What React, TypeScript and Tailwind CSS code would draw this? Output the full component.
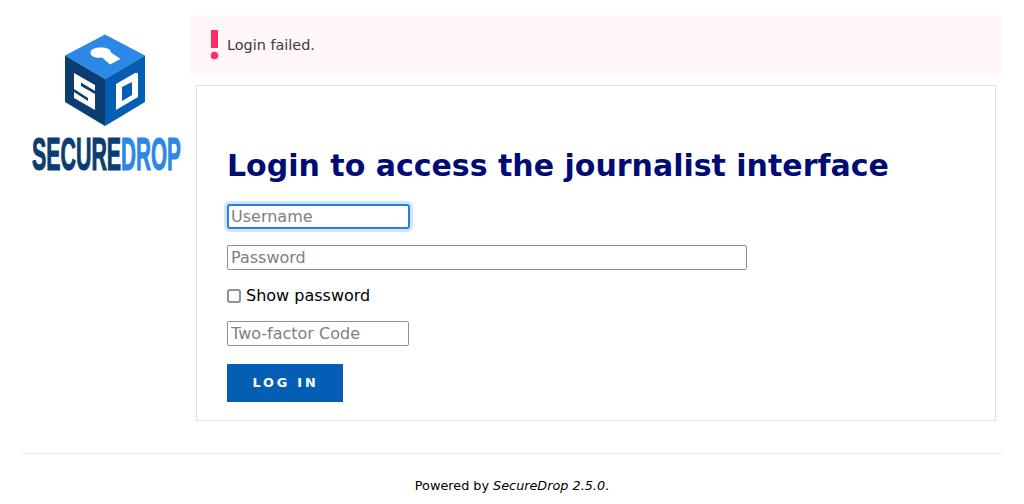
const inputBase = "block h-[25px] bg-white text-[16px] text-black placeholder:text-[#808080] outline-none";
const inputPlain = inputBase + " border border-[#8f8f9d] rounded-[2px] px-[3px]";
const inputFocused = inputBase + " border-2 border-[#2a7de1] rounded-[3px] px-[2px] ring-[3px] ring-[#cfe6fd]";

export default function App() {
  return (
    <div className="w-[1024px] h-[504px] overflow-hidden bg-white font-['DejaVu_Sans',sans-serif] text-black">
      <div className="flex pl-[22px] pr-[22px] pt-[15px]">
        <div className="w-[168px] shrink-0 pt-[19px] pl-[8px]">
          <svg width="153" height="150" viewBox="0 0 153 150" className="block">
            <polygon points="75,0.5 115,21.5 75,45 35,21.5" fill="#2d87e6" />
            <polygon points="35,21.5 75,45 75,92 35,68" fill="#0a3d70" />
            <polygon points="115,21.5 75,45 75,92 115,68" fill="#045fb4" />
            <path fill="#fff" d="M60.5,19 C60.5,15 65,13.5 71,13.5 C77,13.5 81,15.5 81,18.5 L90.5,25 L80,30.5 L72,23.5 C66,24.5 60.5,22.5 60.5,19 Z" />
            <path fill="#fff" d="M44,39 L65,51 L65,57 L51,48.5 L51,52 L65,60 L65,76 L44,64 L44,58 L58,67 L58,64 L44,55 Z" />
            <path fill="#fff" fillRule="evenodd" d="M86,50 L105,39 Q108,38 108,41 L108,63 L86,76 Z M92,53 L92,67 L102,61 L102,48 Z" />
            <text transform="translate(2,135.5) scale(0.465,1)" fontFamily="Liberation Sans, sans-serif" fontWeight="700" fontSize="46" fill="#0a3d70" stroke="#0a3d70" strokeWidth="1.2">SECURE</text>
            <text transform="translate(91,135.5) scale(0.45,1)" fontFamily="Liberation Sans, sans-serif" fontWeight="700" fontSize="46" fill="#2d87e6" stroke="#2d87e6" strokeWidth="1.2">DROP</text>
          </svg>
        </div>
        <main className="flex-1">
          <div className="h-[60px] bg-[#fff6f7] flex items-center pl-[20px] text-[14.4px] text-[#3a3a3a]">
            <svg width="9" height="30" viewBox="0 0 9 30" className="shrink-0 mr-[8px]">
              <rect x="1" y="0" width="7" height="18" fill="#ff2d66" />
              <circle cx="4.5" cy="25.5" r="3.8" fill="#ff2d66" />
            </svg>
            <span className="pt-[2px]">Login failed.</span>
          </div>
          <section className="mt-[10px] mx-[6px] h-[336px] border border-[#e0e0e0] pl-[30px] pt-[60px]">
            <h1 className="text-[30px] leading-[40px] font-bold text-[#000b74]">Login to access the journalist interface</h1>
            <form className="mt-[18px]">
              <input placeholder="Username" autoComplete="off" className={inputFocused + " w-[183px]"} />
              <input placeholder="Password" autoComplete="off" className={inputPlain + " w-[520px] mt-[16px]"} />
              <label className="flex items-center mt-[16px] h-[20px] text-[16px]">
                <input type="checkbox" className="appearance-none w-[14px] h-[14px] mr-[5px] bg-white border-2 border-[#8f8f9d] rounded-[3px]" />
                Show password
              </label>
              <input placeholder="Two-factor Code" autoComplete="off" className={inputPlain + " w-[182px] mt-[15px]"} />
              <button type="button" className="block mt-[18px] w-[116px] h-[38px] bg-[#045fb4] text-white text-[12.8px] font-bold tracking-[2.8px] pl-[1px]">LOG IN</button>
            </form>
          </section>
        </main>
      </div>
      <footer className="mx-[22px] mt-[32px] border-t border-[#e6e6e6] pt-[24px] text-center text-[12.8px] leading-[16px]">
        Powered by <em>SecureDrop 2.5.0</em>.
      </footer>
    </div>
  );
}
